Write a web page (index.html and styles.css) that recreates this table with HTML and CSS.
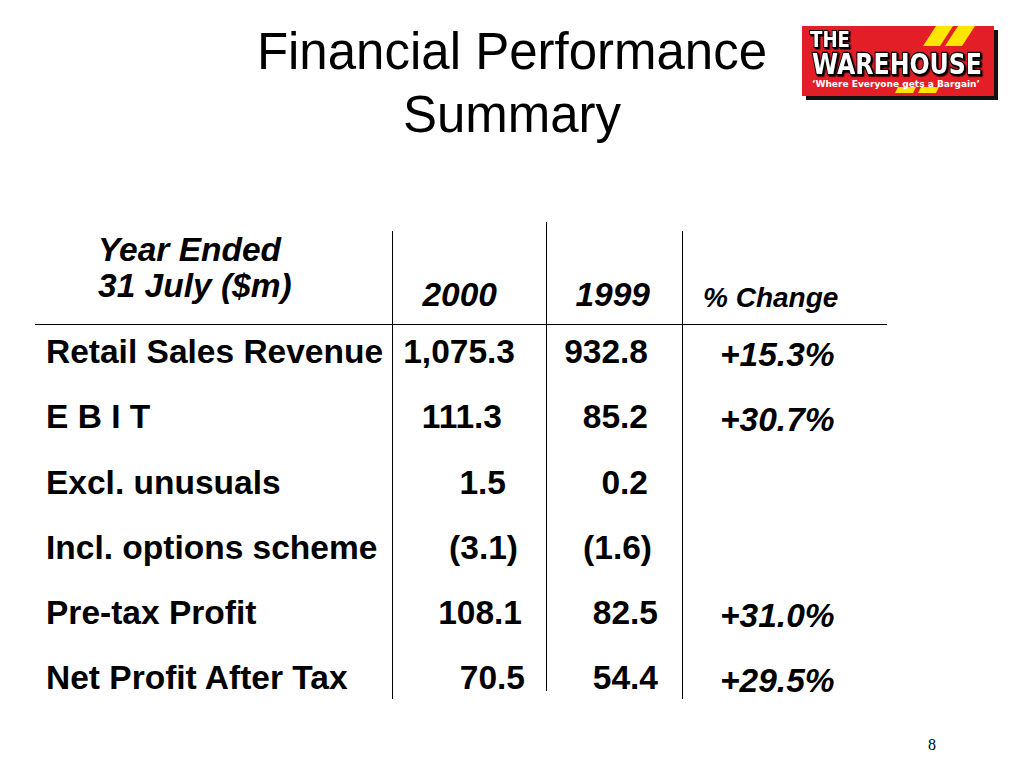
FILE: index.html
```html
<!DOCTYPE html>
<html lang="en">
<head>
<meta charset="utf-8">
<title>Financial Performance Summary</title>
<link rel="stylesheet" href="styles.css">
</head>
<body>
<div class="slide">
  <header class="top">
    <div></div>
    <h1 class="title">Financial Performance<br>Summary</h1>
    <div class="logo-cell">
      <svg class="logo" width="197" height="75" viewBox="0 0 197 75" xmlns="http://www.w3.org/2000/svg">
        <defs>
          <filter id="sh" x="-5%" y="-20%" width="115%" height="150%">
            <feDropShadow dx="1.5" dy="1.5" stdDeviation="0" flood-color="#000"/>
          </filter>
        </defs>
        <rect x="4" y="4" width="192" height="70" fill="#111"/>
        <rect x="0" y="0" width="192" height="70" fill="#e41e26"/>
        <polygon points="134,0 151,0 138,20 121,20" fill="#ffe500"/>
        <polygon points="156,0 173,0 160,20 143,20" fill="#ffe500"/>
        <polygon points="96,61 114,61 111,67 93,67" fill="#ffe500"/>
        <polygon points="119,61 137,61 134,67 116,67" fill="#ffe500"/>
        <g filter="url(#sh)">
          <text transform="translate(8,20.5) scale(1,1.22)" font-family="DejaVu Sans" font-weight="bold" font-size="18" textLength="40" lengthAdjust="spacingAndGlyphs" fill="#fff" stroke="#000" stroke-width="1.5" paint-order="stroke">THE</text>
          <text transform="translate(10,48) scale(1,1.2)" font-family="DejaVu Sans" font-weight="bold" font-size="24" textLength="170" lengthAdjust="spacingAndGlyphs" fill="#fff" stroke="#000" stroke-width="2" paint-order="stroke">WAREHOUSE</text>
        </g>
        <text x="10" y="60.5" font-family="DejaVu Sans" font-weight="bold" font-size="8.5" textLength="168" lengthAdjust="spacingAndGlyphs" fill="#fff">‘Where Everyone gets a Bargain’</text>
      </svg>
    </div>
  </header>

  <div class="table">
    <div class="col col-label">
      <div class="head">
        <div class="yr">Year Ended<br>31 July ($m)</div>
      </div>
      <div class="body">
        <div class="row">Retail Sales Revenue</div>
        <div class="row">E B I T</div>
        <div class="row">Excl. unusuals</div>
        <div class="row">Incl. options scheme</div>
        <div class="row">Pre-tax Profit</div>
        <div class="row">Net Profit After Tax</div>
      </div>
    </div>
    <div class="col col-a">
      <div class="head">
        <div class="hnum">2000</div>
      </div>
      <div class="body">
        <div class="row num">1,075.3</div>
        <div class="row num">111.3</div>
        <div class="row num">1.5</div>
        <div class="row num">(3.1)</div>
        <div class="row num">108.1</div>
        <div class="row num">70.5</div>
      </div>
    </div>
    <div class="col col-b">
      <div class="head">
        <div class="hnum">1999</div>
      </div>
      <div class="body">
        <div class="row num">932.8</div>
        <div class="row num">85.2</div>
        <div class="row num">0.2</div>
        <div class="row num">(1.6)</div>
        <div class="row num">82.5</div>
        <div class="row num">54.4</div>
      </div>
    </div>
    <div class="col col-c">
      <div class="head">
        <div class="hpct">% Change</div>
      </div>
      <div class="body">
        <div class="row pct">+15.3%</div>
        <div class="row pct">+30.7%</div>
        <div class="row pct"></div>
        <div class="row pct"></div>
        <div class="row pct">+31.0%</div>
        <div class="row pct">+29.5%</div>
      </div>
    </div>
  </div>

  <footer class="foot">8</footer>
</div>
</body>
</html>
```

FILE: styles.css
```css
html, body {
  margin: 0;
  padding: 0;
  background: #ffffff;
}

body {
  font-family: "Liberation Sans", Arial, sans-serif;
  color: #000000;
}

.slide {
  width: 1024px;
  height: 768px;
  overflow: hidden;
}

/* ---------- header ---------- */
.top {
  display: grid;
  grid-template-columns: 1fr auto 1fr;
}

.title {
  margin: 0;
  padding-top: 20px;
  font-size: 51px;
  font-weight: normal;
  line-height: 63px;
  text-align: center;
  white-space: nowrap;
}

.logo {
  display: block;
  margin: 26px 0 0 35px;
}

/* ---------- table ---------- */
.table {
  display: flex;
  align-items: flex-start;
  width: 852px;
  margin: 76px 0 0 35px;
}

.col {
  box-sizing: border-box;
}

.col-label { width: 357px; }
.col-a { width: 154px; margin-top: 9px; border-left: 1px solid #000; }
.col-b { width: 136px; border-left: 1px solid #000; }
.col-c { width: 205px; margin-top: 9px; border-left: 1px solid #000; }

.head {
  box-sizing: border-box;
  height: 102px;
  display: flex;
  flex-direction: column;
  justify-content: flex-end;
}

.col-a .head,
.col-c .head {
  height: 93px;
}

.yr {
  font-style: italic;
  font-weight: bold;
  font-size: 33.5px;
  line-height: 36px;
  padding: 0 0 20px 63px;
  white-space: nowrap;
}

.hnum {
  font-style: italic;
  font-weight: bold;
  font-size: 33.5px;
  line-height: 40px;
  padding-bottom: 9px;
  text-align: right;
}

.col-a .hnum { padding-right: 49px; }
.col-b .hnum { padding-right: 32px; }

.hpct {
  font-style: italic;
  font-weight: bold;
  font-size: 28px;
  line-height: 40px;
  padding: 0 0 6px 20px;
  white-space: nowrap;
}

.body {
  box-sizing: border-box;
  border-top: 1px solid #000;
}

.col-label .body { padding-left: 11px; }
.col-a .body { height: 375px; }
.col-b .body { height: 367px; }
.col-c .body { height: 375px; padding-top: 3px; }

.row {
  height: 65.3px;
  line-height: 53px;
  font-size: 33.5px;
  font-weight: bold;
  white-space: nowrap;
}

.num { text-align: right; }

.col-a .row:nth-child(1) { padding-right: 31px; }
.col-a .row:nth-child(2) { padding-right: 44px; }
.col-a .row:nth-child(3) { padding-right: 40px; }
.col-a .row:nth-child(4) { padding-right: 28px; }
.col-a .row:nth-child(5) { padding-right: 24px; }
.col-a .row:nth-child(6) { padding-right: 21px; }

.col-b .row:nth-child(1),
.col-b .row:nth-child(2),
.col-b .row:nth-child(3) { padding-right: 34px; }
.col-b .row:nth-child(4) { padding-right: 30px; }
.col-b .row:nth-child(5),
.col-b .row:nth-child(6) { padding-right: 24px; }

.pct {
  font-style: italic;
  padding-left: 37px;
}

/* ---------- footer ---------- */
.foot {
  margin-top: 19px;
  padding-right: 88px;
  text-align: right;
  font-family: "Liberation Serif", "Times New Roman", serif;
  font-size: 16px;
  line-height: 18px;
}
```
